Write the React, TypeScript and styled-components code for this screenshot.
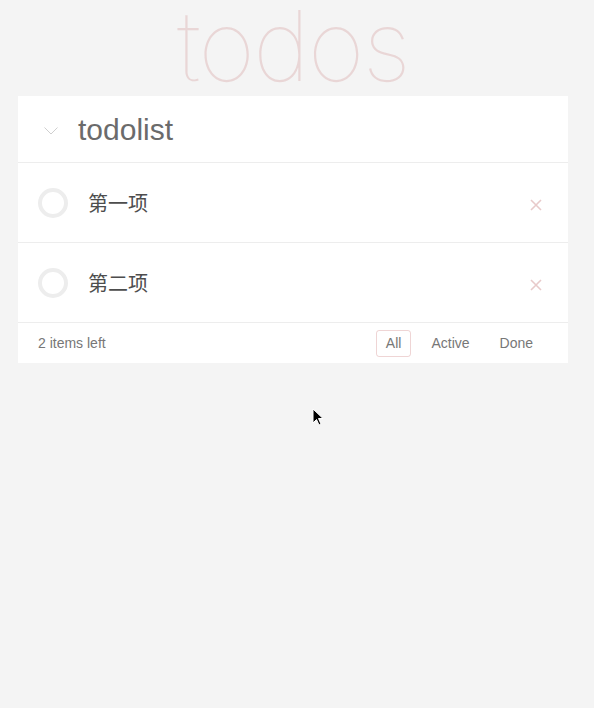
import React from "react";
import styled, { createGlobalStyle } from "styled-components";

const Global = createGlobalStyle`
  html, body { margin: 0; padding: 0; background: #f4f4f4; }
  body { font-family: "Liberation Sans", "Noto Sans CJK SC", Arial, sans-serif; color: #4d4d4d; }
  * { box-sizing: border-box; }
`;

const Page = styled.div`
  position: relative;
  display: flow-root;
  width: 594px;
  height: 708px;
  padding-left: 18px;
`;

const Title = styled.h1`
  margin: 0;
  width: 550px;
  height: 96px;
  text-align: center;
  font-family: Inter, "Liberation Sans", sans-serif;
  font-weight: 100;
  font-size: 98px;
  line-height: 92px;
  letter-spacing: -2px;
  color: rgba(175, 47, 47, 0.15);
`;

const Card = styled.section`
  width: 550px;
  background: #fff;
`;

const Header = styled.div`
  height: 67px;
  display: flex;
  align-items: center;
  border-bottom: 1px solid #ededed;
`;

const Toggle = styled.span`
  width: 60px;
  display: flex;
  justify-content: flex-end;
  padding-right: 20px;
  padding-top: 4px;
`;

const HeaderText = styled.div`
  font-size: 30px;
  color: #6b6b6b;
  padding-top: 2px;
`;

const Item = styled.div`
  height: 80px;
  display: flex;
  align-items: center;
  border-bottom: 1px solid #ededed;
  padding-left: 20px;
  padding-right: 26px;
`;

const Circle = styled.span`
  width: 30px;
  height: 30px;
  border-radius: 50%;
  border: 4px solid #ededed;
  flex: none;
`;

const Label = styled.span`
  flex: 1;
  margin-left: 20px;
  font-size: 20px;
  color: #4d4d4d;
  font-family: "Noto Sans CJK SC", "Liberation Sans", sans-serif;
`;

const Destroy = styled.span`
  display: flex;
  padding-top: 4px;
`;

const Footer = styled.div`
  height: 40px;
  display: flex;
  align-items: center;
  padding: 0 25px 0 20px;
  font-size: 14px;
  color: #777;
`;

const Count = styled.span`
  flex: 1;
`;

const Filters = styled.div`
  display: flex;
  gap: 10px;
`;

const Filter = styled.span<{ $active?: boolean }>`
  padding: 4px 9px 5px;
  border: 1px solid ${(p) => (p.$active ? "rgba(175, 47, 47, 0.2)" : "transparent")};
  border-radius: 3px;
  color: #777;
`;

const Cursor = styled.svg`
  position: absolute;
  left: 312px;
  top: 408px;
`;

const XIcon = () => (
  <svg width="12" height="12" viewBox="0 0 12 12">
    <path d="M1 1L11 11M11 1L1 11" stroke="#e8caca" strokeWidth="1.6" />
  </svg>
);

export default function App() {
  return (
    <>
      <Global />
      <Page>
        <Title>todos</Title>
        <Card>
          <Header>
            <Toggle>
              <svg width="14" height="8" viewBox="0 0 14 8">
                <path d="M0.5 0.5L7 7L13.5 0.5" stroke="#cfcfcf" strokeWidth="1" fill="none" />
              </svg>
            </Toggle>
            <HeaderText>todolist</HeaderText>
          </Header>
          <Item>
            <Circle />
            <Label>第一项</Label>
            <Destroy><XIcon /></Destroy>
          </Item>
          <Item>
            <Circle />
            <Label>第二项</Label>
            <Destroy><XIcon /></Destroy>
          </Item>
          <Footer>
            <Count>2 items left</Count>
            <Filters>
              <Filter $active>All</Filter>
              <Filter>Active</Filter>
              <Filter>Done</Filter>
            </Filters>
          </Footer>
        </Card>
        <Cursor width="14" height="20" viewBox="0 0 14 20">
          <path d="M1 1L1 15L4.5 11.5L7 17L9 16L6.5 10.5L11 10.5Z" fill="#000" stroke="#fff" strokeWidth="1" />
        </Cursor>
      </Page>
    </>
  );
}
